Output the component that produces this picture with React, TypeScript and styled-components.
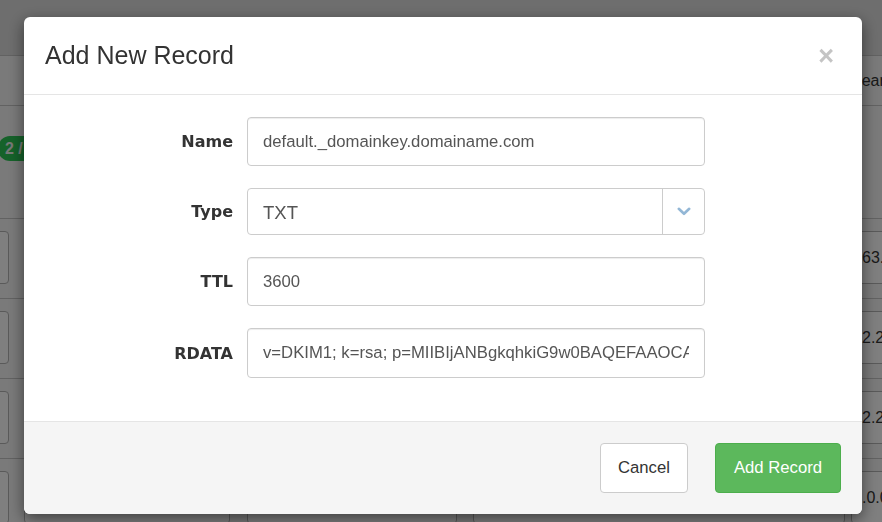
import React from "react";
import styled, { createGlobalStyle } from "styled-components";

const GlobalStyle = createGlobalStyle`
  html, body { margin: 0; padding: 0; width: 100%; height: 100%; overflow: hidden; }
  body { font-family: "Liberation Sans", Arial, sans-serif; background: #f4f4f4; }
  * { box-sizing: border-box; }
`;

/* ---------- background page (behind the modal) ---------- */
const Page = styled.div`
  width: 882px;
  height: 522px;
  overflow: hidden;
  background: #f4f4f4;
  display: flex;
  flex-direction: column;
  color: #333;
  font-size: 16px;
`;

const TopBar = styled.div`
  flex: none;
  height: 56px;
  background: #dcdcdc;
  border-bottom: 1px solid #c4c4c4;
`;

const HeadRow = styled.div`
  flex: none;
  height: 50px;
  display: grid;
  grid-template-columns: 851px 1fr;
  align-items: center;
  border-bottom: 1px solid #c4c4c4;
  white-space: nowrap;
`;

const BadgeZone = styled.div`
  flex: none;
  height: 112px;
  padding-top: 30px;
`;

const Badge = styled.span`
  display: inline-flex;
  align-items: center;
  height: 25px;
  margin-left: -2px;
  padding: 0 10px 0 7px;
  border-radius: 12px;
  background: #2cc455;
  color: #f0f0f0;
  font-weight: bold;
  font-size: 16px;
`;

const Row = styled.div`
  flex: none;
  height: 80px;
  border-top: 1px solid #c4c4c4;
  display: flex;
  align-items: flex-start;
  padding-top: 12px;
  white-space: nowrap;
`;

const CellBox = styled.div<{ $w: number; $ml: number }>`
  flex: none;
  width: ${(p) => p.$w}px;
  margin-left: ${(p) => p.$ml}px;
  height: 53px;
  border: 1px solid #b4b4b4;
  border-radius: 4px;
  background: #fff;
  display: flex;
  align-items: center;
  padding-left: 10px;
`;

/* ---------- modal ---------- */
const Backdrop = styled.div`
  position: fixed;
  inset: 0;
  background: rgba(0, 0, 0, 0.5);
`;

const Modal = styled.div`
  position: fixed;
  top: 17px;
  left: 24px;
  width: 838px;
  background: #fff;
  border-radius: 6px;
  box-shadow: 0 5px 15px rgba(0, 0, 0, 0.5);
  overflow: hidden;
  display: flex;
  flex-direction: column;
`;

const Header = styled.div`
  display: flex;
  align-items: center;
  justify-content: space-between;
  padding: 21px 21px 22px 21px;
  border-bottom: 1px solid #e5e5e5;
`;

const Title = styled.h4`
  margin: 0;
  font-size: 25px;
  line-height: 34px;
  font-weight: normal;
  color: #333;
`;

const Close = styled.button`
  background: none;
  border: 0;
  padding: 0;
  margin: 2px 7px 0 0;
  font-family: "Liberation Sans", Arial, sans-serif;
  font-weight: bold;
  font-size: 27px;
  line-height: 1;
  color: #c4c4c4;
  cursor: pointer;
`;

const Body = styled.div`
  display: flex;
  flex-direction: column;
  gap: 22px;
  padding: 22px 21px 43px 21px;
`;

const FormRow = styled.div`
  display: grid;
  grid-template-columns: 188px 458px;
  column-gap: 14px;
  align-items: center;
`;

const Label = styled.label`
  text-align: right;
  font-family: "DejaVu Sans", Verdana, sans-serif;
  font-weight: bold;
  font-size: 16px;
  color: #333;
`;

const TextInput = styled.input<{ $h: number }>`
  width: 100%;
  height: ${(p) => p.$h}px;
  padding: 0 15px;
  border: 1px solid #ccc;
  border-radius: 4px;
  box-shadow: inset 0 1px 1px rgba(0, 0, 0, 0.075);
  font-family: "Liberation Sans", Arial, sans-serif;
  font-size: 16.7px;
  color: #555;
  outline: none;
  background: #fff;
`;

const SelectBox = styled.div`
  display: flex;
  height: 47px;
  border: 1px solid #ccc;
  border-radius: 4px;
  background: #fff;
`;

const SelectValue = styled.div`
  flex: 1;
  display: flex;
  align-items: center;
  padding: 3px 15px 0;
  font-size: 18.5px;
  color: #555;
`;

const SelectArrow = styled.div`
  flex: none;
  width: 42px;
  border-left: 1px solid #ccc;
  display: flex;
  align-items: center;
  justify-content: center;
`;

const Footer = styled.div`
  display: flex;
  justify-content: flex-end;
  gap: 27px;
  padding: 21px 21px 21px 21px;
  background: #f5f5f5;
  border-top: 1px solid #e5e5e5;
`;

const Button = styled.button<{ $primary?: boolean; $px: number }>`
  height: 50px;
  padding: 0 ${(p) => p.$px}px;
  border-radius: 4px;
  font-family: "Liberation Sans", Arial, sans-serif;
  font-size: 16.7px;
  cursor: pointer;
  border: 1px solid ${(p) => (p.$primary ? "#4cae4c" : "#ccc")};
  background: ${(p) => (p.$primary ? "#5cb85c" : "#fff")};
  color: ${(p) => (p.$primary ? "#fff" : "#333")};
`;

const RDATA =
  "v=DKIM1; k=rsa; p=MIIBIjANBgkqhkiG9w0BAQEFAAOCAQ8AMIIBCgKCAQEAxq3Lz8bY2mQk4Nf7";

const rows = ["63.142.7.18", "2.2.14.5", "2.2.31.9", ".0.0.1"];

export default function App() {
  return (
    <>
      <GlobalStyle />
      <Page>
        <TopBar />
        <HeadRow>
          <span />
          <span>Search</span>
        </HeadRow>
        <BadgeZone>
          <Badge>2 / 4</Badge>
        </BadgeZone>
        {rows.map((r) => (
          <Row key={r}>
            <CellBox $w={40} $ml={-31} />
            <CellBox $w={206} $ml={15} />
            <CellBox $w={210} $ml={17} />
            <CellBox $w={372} $ml={16} />
            <CellBox $w={80} $ml={6}>{r}</CellBox>
          </Row>
        ))}
      </Page>
      <Backdrop />
      <Modal role="dialog" aria-label="Add New Record">
        <Header>
          <Title>Add New Record</Title>
          <Close aria-label="Close">×</Close>
        </Header>
        <Body>
          <FormRow>
            <Label>Name</Label>
            <TextInput $h={49} readOnly value="default._domainkey.domainame.com" />
          </FormRow>
          <FormRow>
            <Label>Type</Label>
            <SelectBox>
              <SelectValue>TXT</SelectValue>
              <SelectArrow>
                <svg width="14" height="9" viewBox="0 0 14 9">
                  <polyline
                    points="1.8,1.8 7,6.8 12.2,1.8"
                    fill="none"
                    stroke="#93b7d6"
                    strokeWidth="2.6"
                    strokeLinecap="round"
                    strokeLinejoin="round"
                  />
                </svg>
              </SelectArrow>
            </SelectBox>
          </FormRow>
          <FormRow>
            <Label>TTL</Label>
            <TextInput $h={49} readOnly value="3600" />
          </FormRow>
          <FormRow>
            <Label>RDATA</Label>
            <TextInput $h={50} readOnly value={RDATA} />
          </FormRow>
        </Body>
        <Footer>
          <Button $px={17}>Cancel</Button>
          <Button $primary $px={18}>Add Record</Button>
        </Footer>
      </Modal>
    </>
  );
}
